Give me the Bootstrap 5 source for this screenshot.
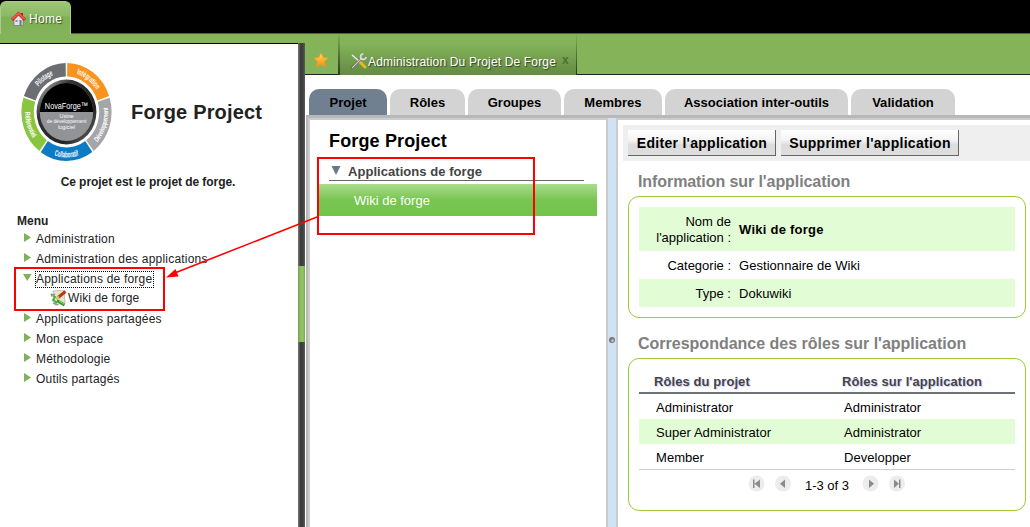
<!DOCTYPE html>
<html lang="fr">
<head>
<meta charset="utf-8">
<title>Forge Project</title>
<link href="https://cdn.jsdelivr.net/npm/bootstrap@5.3.0/dist/css/bootstrap.min.css" rel="stylesheet">
<style>
body{font-family:"Liberation Sans",Arial,sans-serif;font-size:13px;line-height:16px;color:#000;background:#fff}
.shell{width:1030px;height:527px}
.topbar{height:34px;background:#000;border-bottom:1px solid #4c6633;padding-top:1px}
.home-tab{width:71px;height:33px;border-radius:6px 6px 0 0;background:linear-gradient(#9cc676,#8cb965 14px,#7fb055 15px,#84b35a);border:1px solid #a8cd87;border-bottom:0;color:#fff;font-size:12px;letter-spacing:.3px;text-shadow:1px 1px 1px #34511d;padding:1px 0 0 10px;gap:3px}
.side{width:298px;border-top:1px solid #000;background:#fff;color:#222;font-size:12px}
.side-wrap{padding-top:9px;background:linear-gradient(#84b35a 9px,#fff 9px)}
.brand{padding:18px 0 0 20px;gap:18px}
.brand h1{font-size:20px;font-weight:700;margin:0;letter-spacing:.17px;line-height:24px}
.intro{font-weight:700;letter-spacing:-.06px;margin:12px 0 0;line-height:16px;padding-right:2px}
.menu-title{font-weight:700;margin:23px 0 0 17px;line-height:16px}
.tree{margin:0;padding:0 0 0 23px;letter-spacing:.2px}
.tree li{height:20px;line-height:20px;gap:4px;white-space:nowrap}
.tree .sub{padding-left:27px;gap:1px;letter-spacing:.1px;padding-bottom:2px}
.tree svg.arr{margin-top:-3px}
.focus-dot{outline:1px dotted #000;line-height:15px;padding-right:1px}
.split{width:7px;margin-top:9px;background:linear-gradient(90deg,#777 0,#4a4a4a 2px,#393939 3px,#444 5px,#5a5a5a 7px);padding-top:223px}
.split div{height:76px;background:linear-gradient(90deg,#729e4c,#8cbd62 2px,#91c368 5px,#76a550)}
.doc-tabs{height:41px;background:#84b35a}
.fav{width:33px;height:41px;border-bottom:1px solid #222;padding:18px 0 0 8px}
.doc-tab{width:239px;height:41px;background:linear-gradient(#84b35a 10px,#648943 41px);border:0 solid #30431f;border-width:0 1px 0 2px;color:#fff;font-size:12px;letter-spacing:.16px;text-shadow:1px 1px 1px #2c4518;padding:14px 0 0 11px;border-image:linear-gradient(#84b35a,#273619) 1}
.doc-tab .close-x{color:#4f7130;font-weight:700;text-shadow:none;margin-left:6px;margin-top:-3px}
.rest{border-bottom:1px solid #222}
.pills{padding:14px 0 0 4px;gap:3px;height:40px}
.pills .pill{height:26px;border-radius:10px 10px 0 0;background:#d3d3d3;font-weight:700;letter-spacing:.03px;text-align:center;line-height:27px;white-space:nowrap}
.pills .on{background:#708090}
.frame{border-top:3px solid #b8b8b8;margin-left:1px}
.frame-in{border-left:2px solid #b8b8b8}
.mid{width:300px;border:solid #ccc;border-width:2px 2px 0 2px}
.mid h2{font-size:18px;font-weight:700;letter-spacing:.15px;margin:10px 0 0 19px;line-height:22px}
.group{margin:10px 0 0 19px;width:255px;height:19px;border-bottom:1px solid #666;color:#444;font-weight:700;gap:7px;padding-left:2px;padding-top:1px;letter-spacing:.05px}
.group span{padding-top:1px}
.sel{margin:3px 0 0 9px;width:278px;height:32px;background:linear-gradient(#a8dc8e,#79c552 50%,#72c44a);color:#fff;line-height:34px;padding-left:35px}
.bar{width:8px;background:#d0e3f5}
.main{border-left:2px solid #ccc}
.main-in{border-top:2px solid #ccc;padding:5px 0 0 5px}
.tools{height:36px;background:#efefef;padding:5px 0 0 5px;gap:5px}
.tools button{border:0;border-bottom:1px solid #666;border-right:1px solid #666;background:linear-gradient(#fff,#f4f4f4 40%,#dcdcdc 60%,#dedede);font-size:14px;font-weight:700;letter-spacing:.28px;height:26px;padding:1px 0 0 1px;color:#000;white-space:nowrap}
.main h3{font-size:16px;font-weight:700;color:#808080;letter-spacing:-.08px;margin:0 0 0 15px;line-height:20px}
.panel{width:398px;margin-left:5px;border:1px solid #9acd32;border-radius:11px;padding:10px}
.kv{height:28px;padding-top:1px}
.kv>span:first-child{width:92px;text-align:right}
.tint{background:#e2fdd6}
.kv>span+span{margin-left:8px;letter-spacing:.05px}
.kv>span.fw-bold{letter-spacing:.25px}
.thead-row{height:26px;border-bottom:2px solid #6a7278;color:#444;font-weight:700;letter-spacing:.08px;text-shadow:1px 1px 1px #ccf;padding:6px 0 0 15px}
.thead-row span,.role span{width:188px;flex:none;white-space:nowrap}
.role{height:25px;padding-left:17px;line-height:27px;letter-spacing:.05px}
.pager{border-top:1px solid #ccc;height:30px}
.notes{left:0;top:0;pointer-events:none}
</style>
</head>
<body>
<div class="shell position-relative overflow-hidden d-flex flex-column">
<header class="topbar"><div class="home-tab d-flex align-items-center">
<svg width="15" height="16" viewBox="0 0 15 16"><path d="M3 7v7.500h9V7L7.500 3z" fill="#dfe3e8" stroke="#777" stroke-width=".7"/><path d="M10 2h2v4l-2-2z" fill="#a22"/><path d="M1 8.800 7.500 2.500 14 8.800" fill="none" stroke="#b51c1c" stroke-width="3"/><path d="M1.200 8.200 7.500 2.200 13.800 8.200" fill="none" stroke="#f0564d" stroke-width="2"/><path d="M4.500 9h2v2h-2z" fill="#6f91b8"/><path d="M8.500 9h2v5.500h-2z" fill="#777"/></svg>
<span>Home</span></div></header>
<div class="d-flex flex-grow-1">
<div class="side-wrap"><aside class="side">
<div class="brand d-flex align-items-center">
<svg width="93" height="100" viewBox="-50.500 -50 101 100" preserveAspectRatio="none" font-family="Liberation Sans, Arial, sans-serif">
<defs>
<path id="ringTop" d="M-39.500 0A39.500 39.500 0 1 1 39.500 0"/>
<path id="ringRight" d="M0 45A45 45 0 0 0 0 -45"/>
<path id="ringBottom" d="M-45.500 0A45.500 45.500 0 0 0 45.500 0"/>
<path id="ringLeft" d="M0 -45A45 45 0 0 0 0 45"/>
<linearGradient id="rim" x1="0" y1="0" x2="1" y2="1"><stop offset="0" stop-color="#ccc"/><stop offset=".3" stop-color="#333"/><stop offset=".7" stop-color="#222"/><stop offset="1" stop-color="#777"/></linearGradient>
</defs>
<g fill="none" stroke-width="13.500" stroke-dasharray="19.400 80.600">
<circle r="42.200" pathLength="100" stroke="#f7931e" transform="rotate(-89)"/>
<circle r="42.200" pathLength="100" stroke="#a5a6a8" transform="rotate(-17)"/>
<circle r="42.200" pathLength="100" stroke="#0d7ac4" transform="rotate(55)"/>
<circle r="42.200" pathLength="100" stroke="#8bc540" transform="rotate(127)"/>
<circle r="42.200" pathLength="100" stroke="#6d6e74" transform="rotate(199)"/>
</g>
<circle r="32.500" fill="url(#rim)"/><circle r="29" fill="#929397"/><path d="M-29 0A29 29 0 0 1 29 0z" fill="#000"/>
<g fill="#fff" text-anchor="middle">
<text x="0" y="-3" font-size="9.500" textLength="47" lengthAdjust="spacingAndGlyphs">NovaForge™</text>
<g font-size="6"><text y="6">Usine</text><text y="11.500" textLength="43" lengthAdjust="spacingAndGlyphs">de développement</text><text y="17">logiciel</text></g>
<g font-size="8.500" font-weight="700">
<text><textPath href="#ringTop" startOffset="30%" textLength="20" lengthAdjust="spacingAndGlyphs">Pilotage</textPath></text>
<text><textPath href="#ringTop" startOffset="70%" textLength="27" lengthAdjust="spacingAndGlyphs">Intégration</textPath></text>
<text font-size="7.500"><textPath href="#ringRight" startOffset="40%" textLength="38" lengthAdjust="spacingAndGlyphs">Développement</textPath></text>
<text><textPath href="#ringBottom" startOffset="50%" textLength="27" lengthAdjust="spacingAndGlyphs">Collaboratif</textPath></text>
<text font-size="8"><textPath href="#ringLeft" startOffset="60%" textLength="28" lengthAdjust="spacingAndGlyphs">Référentiel</textPath></text>
</g></g></svg>
<h1>Forge Project</h1></div>
<p class="intro text-center">Ce projet est le projet de forge.</p>
<div class="menu-title">Menu</div>
<ul class="tree list-unstyled">
<li class="d-flex align-items-center"><svg class="arr" width="9" height="9"><path d="M1 0 8 4.500 1 9z" fill="#7cb356"/></svg><span>Administration</span></li>
<li class="d-flex align-items-center"><svg class="arr" width="9" height="9"><path d="M1 0 8 4.500 1 9z" fill="#7cb356"/></svg><span>Administration des applications</span></li>
<li class="d-flex align-items-center"><svg class="arr" width="9" height="9"><path d="M0 1H8.500L4.250 8z" fill="#7cb356"/></svg><span class="focus-dot">Applications de forge</span></li>
<li class="sub d-flex align-items-center"><svg width="17" height="17" viewBox="0 0 17 17"><path d="M3 1 14 0 15 13 5 15z" fill="#e9e5c8" stroke="#aaa58b" stroke-width=".6"/><path d="M1 4 5 7 3 10 7 13" fill="none" stroke="#4caf45" stroke-width="2"/><path d="M1 6 5 4M3 13 8 15" stroke="#999" stroke-width="1.500"/><path d="M15.500 1.500 8 7.500" stroke="#b33a1b" stroke-width="3"/><path d="M9 6.500 6 9" stroke="#e6b66b" stroke-width="2"/><path d="M7 10.500 14.500 15" stroke="#2f9e2d" stroke-width="3"/><path d="M9 11 14 14" stroke="#85dd65" stroke-width="1"/></svg><span>Wiki de forge</span></li>
<li class="d-flex align-items-center"><svg class="arr" width="9" height="9"><path d="M1 0 8 4.500 1 9z" fill="#7cb356"/></svg><span>Applications partagées</span></li>
<li class="d-flex align-items-center"><svg class="arr" width="9" height="9"><path d="M1 0 8 4.500 1 9z" fill="#7cb356"/></svg><span>Mon espace</span></li>
<li class="d-flex align-items-center"><svg class="arr" width="9" height="9"><path d="M1 0 8 4.500 1 9z" fill="#7cb356"/></svg><span>Méthodologie</span></li>
<li class="d-flex align-items-center"><svg class="arr" width="9" height="9"><path d="M1 0 8 4.500 1 9z" fill="#7cb356"/></svg><span>Outils partagés</span></li>
</ul>
</aside></div>
<div style="background:#84b35a" class="d-flex"><div class="split"><div></div></div></div>
<section class="flex-grow-1 d-flex flex-column">
<div class="doc-tabs d-flex">
<div class="fav"><svg class="d-block" width="16" height="16" viewBox="0 0 16 16"><defs><linearGradient id="gold" x2="0" y2="1"><stop stop-color="#ffe27a"/><stop offset=".5" stop-color="#ffb52e"/><stop offset="1" stop-color="#f58a16"/></linearGradient></defs><path d="M8 .8 10.200 5.500 15.200 6.100 11.500 9.600 12.500 14.700 8 12.200 3.500 14.700 4.500 9.600.8 6.100 5.800 5.500z" fill="url(#gold)" stroke="#f0962a" stroke-width=".8" stroke-linejoin="round"/></svg></div>
<div class="doc-tab d-flex align-items-center"><svg width="16" height="16" viewBox="0 0 16 16" style="margin-top:-2px"><path d="M1 2 9 9" stroke="#e8e8e8" stroke-width="1.600"/><path d="M9 9 14 14" stroke="#e9b91e" stroke-width="3" stroke-linecap="round"/><path d="M1.500 14.500 11 5" stroke="#555" stroke-width="2.400" stroke-linecap="round"/><path d="M1.500 14.500 11 5" stroke="#ccc" stroke-width="1.300" stroke-linecap="round"/><path d="M12.500 1A2.700 2.700 0 1 0 15 4" fill="none" stroke="#ddd" stroke-width="1.700"/></svg><span class="text-nowrap" style="margin-left:1px">Administration Du Projet De Forge</span><span class="close-x">x</span></div>
<div class="rest flex-grow-1"></div>
</div>
<nav class="pills d-flex">
<div class="pill on" style="width:78px">Projet</div><div class="pill" style="width:75px">Rôles</div><div class="pill" style="width:93px">Groupes</div><div class="pill" style="width:98px">Membres</div><div class="pill" style="width:183px">Association inter-outils</div><div class="pill" style="width:104px">Validation</div>
</nav>
<div class="frame flex-grow-1 d-flex flex-column"><div class="frame-in d-flex flex-grow-1">
<div class="mid"><h2>Forge Project</h2>
<div class="group d-flex"><svg width="10" height="10" style="margin-top:3px"><path d="M.5 0H9.500L5 9z" fill="#66788a"/></svg><span>Applications de forge</span></div>
<div class="sel">Wiki de forge</div></div>
<div class="bar d-flex align-items-center justify-content-center"><svg width="8" height="8" style="margin-top:34px"><circle cx="4" cy="4" r="3" fill="#777"/><circle cx="4.500" cy="4.500" r="1.500" fill="#bbb"/></svg></div>
<div class="main flex-grow-1"><div class="main-in">
<div class="tools d-flex"><button style="width:148px">Editer l'application</button><button style="width:178px">Supprimer l'application</button></div>
<h3 style="padding-top:11px">Information sur l'application</h3>
<div class="panel" style="margin-top:4px">
<div class="kv tint d-flex align-items-center" style="height:44px"><span>Nom de<br>l'application :</span><span class="fw-bold">Wiki de forge</span></div>
<div class="kv d-flex align-items-center"><span>Categorie :</span><span>Gestionnaire de Wiki</span></div>
<div class="kv tint d-flex align-items-center"><span>Type :</span><span>Dokuwiki</span></div>
</div>
<h3 style="padding-top:16px;letter-spacing:0">Correspondance des rôles sur l'application</h3>
<div class="panel" style="height:153px;margin-top:4px;padding-top:9px">
<div class="thead-row d-flex"><span>Rôles du projet</span><span>Rôles sur l'application</span></div>
<div class="role d-flex"><span>Administrator</span><span>Administrator</span></div>
<div class="role tint d-flex"><span>Super Administrator</span><span>Administrator</span></div>
<div class="role d-flex"><span>Member</span><span>Developper</span></div>
<div class="pager d-flex justify-content-center">
<svg width="44" height="18" style="margin:5px 13px 0 0"><g fill="#ececec"><circle cx="8.500" cy="8.500" r="8"/><circle cx="35" cy="8.500" r="8"/></g><path d="M5 4.500H6.500V13H5zM12 4.500V13L6.500 8.700zM37 4.500V13L32 8.700z" fill="#8b8b8b"/></svg>
<span style="padding-top:8px">1-3 of 3</span>
<svg width="44" height="18" style="margin:5px 0 0 13px"><g fill="#ececec"><circle cx="8.500" cy="8.500" r="8"/><circle cx="35" cy="8.500" r="8"/></g><path d="M7 4.500V13L12 8.700zM32 4.500V13L37 8.700zM37 4.500H38.500V13H37z" fill="#8b8b8b"/></svg>
</div></div>
</div></div>
</div></div>
</section></div>
<svg class="notes position-absolute" width="1030" height="527"><g fill="none" stroke="#f00" stroke-width="2"><rect x="15" y="268" width="149" height="42"/><rect x="318" y="158" width="216" height="76"/><path d="M317 217 176 272.500" stroke-width="1.600"/></g><path d="M166 277.500 175.500 269 178.500 276.500z" fill="#f00"/></svg>
</div>
<script src="https://cdn.jsdelivr.net/npm/bootstrap@5.3.0/dist/js/bootstrap.bundle.min.js"></script>
</body>
</html>
